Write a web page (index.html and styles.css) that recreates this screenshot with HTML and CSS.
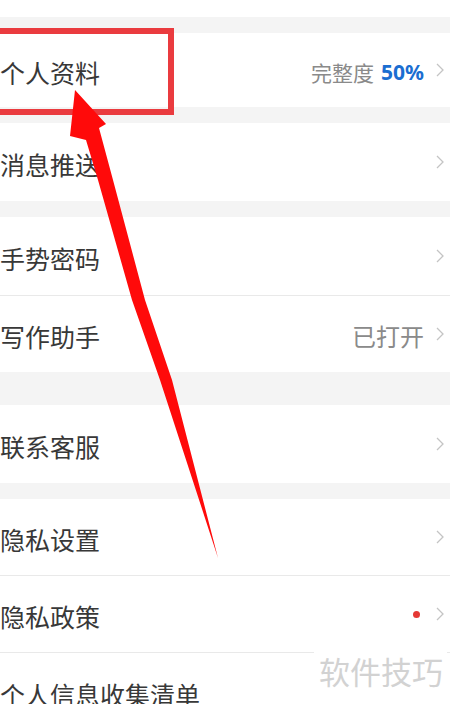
FILE: index.html
```html
<!DOCTYPE html>
<html lang="zh-CN">
<head>
    <meta charset="UTF-8">
    <meta name="viewport" content="width=device-width, initial-scale=1.0">
    <title>设置</title>
    <link rel="stylesheet" href="styles.css">
</head>
<body>

<div class="page">
    <!-- 上一组的尾部 -->
    <div class="block-tail"></div>
    <div class="gap"></div>

    <div class="group">
        <div class="row row-first">
            <span class="label">个人资料</span>
            <span class="extra">
                <span class="value">完整度</span>
                <span class="percent">50%</span>
                <svg class="chevron" viewBox="0 0 8 14"><path d="M1 1 L7 7 L1 13"/></svg>
            </span>
        </div>
    </div>
    <div class="gap"></div>

    <div class="group">
        <div class="row">
            <span class="label">消息推送</span>
            <span class="extra">
                <svg class="chevron" viewBox="0 0 8 14"><path d="M1 1 L7 7 L1 13"/></svg>
            </span>
        </div>
    </div>
    <div class="gap"></div>

    <div class="group">
        <div class="row">
            <span class="label">手势密码</span>
            <span class="extra">
                <svg class="chevron" viewBox="0 0 8 14"><path d="M1 1 L7 7 L1 13"/></svg>
            </span>
        </div>
        <div class="row row-short">
            <span class="label">写作助手</span>
            <span class="extra">
                <span class="value value-big">已打开</span>
                <svg class="chevron" viewBox="0 0 8 14"><path d="M1 1 L7 7 L1 13"/></svg>
            </span>
        </div>
    </div>
    <div class="gap gap-wide"></div>

    <div class="group">
        <div class="row">
            <span class="label">联系客服</span>
            <span class="extra">
                <svg class="chevron" viewBox="0 0 8 14"><path d="M1 1 L7 7 L1 13"/></svg>
            </span>
        </div>
    </div>
    <div class="gap"></div>

    <div class="group">
        <div class="row row-short">
            <span class="label">隐私设置</span>
            <span class="extra">
                <svg class="chevron" viewBox="0 0 8 14"><path d="M1 1 L7 7 L1 13"/></svg>
            </span>
        </div>
        <div class="row row-short">
            <span class="label">隐私政策</span>
            <span class="extra">
                <span class="dot"></span>
                <svg class="chevron" viewBox="0 0 8 14"><path d="M1 1 L7 7 L1 13"/></svg>
            </span>
        </div>
        <div class="row">
            <span class="label">个人信息收集清单</span>
        </div>
    </div>

    <!-- 标注：红框和箭头 -->
    <div class="mark-box"></div>
    <svg class="mark-arrow" viewBox="0 0 450 704">
        <path d="M75 90 L106 124 L99 128 L113 180 L145 300 L172 380 L218 558 L160 380 L132 300 L98 180 L86 140 L70 136 Z"/>
    </svg>

    <div class="watermark">软件技巧</div>
</div>

</body>
</html>
```

FILE: styles.css
```css
body {
    margin: 0;
    padding: 0;
    background-color: #f4f4f4;
    font-family: "Noto Sans CJK SC", "Noto Sans", sans-serif;
    color: #333;
    overflow: hidden;
}

.page {
    position: relative;
    width: 450px;
    height: 704px;
    overflow: hidden;
}

.block-tail {
    height: 17px;
    background-color: #fff;
}

.gap {
    height: 16px;
    background-color: #f4f4f4;
}

.gap-wide {
    height: 33px;
}

.group {
    background-color: #fff;
}

.row {
    display: flex;
    justify-content: space-between;
    align-items: center;
    height: 78px;
    padding: 0 6px 0 0;
    border-top: 1px solid #e9e9e9;
}

.row:first-child {
    border-top: none;
}

.row-first {
    height: 74px;
}

.row-short {
    height: 76px;
}

.label {
    font-size: 25px;
    line-height: 1;
    padding-top: 4px;
    color: #383838;
}

.extra {
    display: flex;
    align-items: center;
}

.value {
    font-size: 21px;
    color: #8a8a8a;
    padding-top: 3px;
}

.value-big {
    font-size: 24px;
}

.percent {
    font-family: "Noto Sans", sans-serif;
    font-weight: bold;
    font-size: 21px;
    color: #1b6ed1;
    margin-left: 7px;
    padding-top: 3px;
}

.chevron {
    width: 8px;
    height: 14px;
    margin-left: 12px;
    fill: none;
    stroke: #c4c4c4;
    stroke-width: 1.3;
}

.dot {
    width: 7px;
    height: 7px;
    border-radius: 50%;
    background-color: #e53935;
    margin-right: 4px;
}

.mark-box {
    position: absolute;
    left: -10px;
    top: 28px;
    width: 172px;
    height: 75px;
    border: 6px solid #ea3b3f;
}

.mark-arrow {
    position: absolute;
    left: 0;
    top: 0;
    width: 450px;
    height: 704px;
    fill: #ff0a0a;
}

.watermark {
    position: absolute;
    left: 314px;
    top: 648px;
    padding: 0 4px 0 5px;
    background-color: #fff;
    font-size: 31px;
    line-height: 46px;
    color: #d2d2d2;
}
```
